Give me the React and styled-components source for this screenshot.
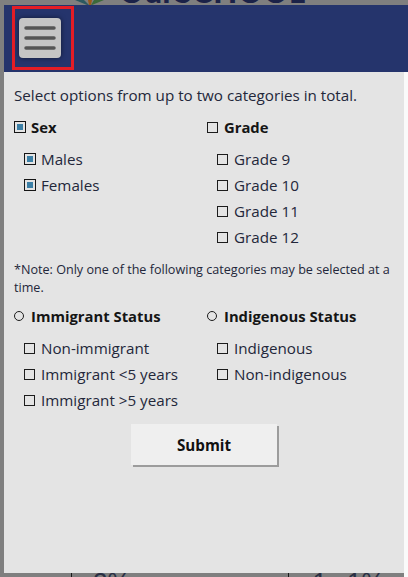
import styled, { createGlobalStyle } from "styled-components";

const GlobalStyle = createGlobalStyle`
  body {
    margin: 0;
    font-family: "Open Sans", "Noto Sans", sans-serif;
  }
`;

const sexOptions = [
  { label: "Males", checked: true },
  { label: "Females", checked: true },
];
const gradeOptions = ["Grade 9", "Grade 10", "Grade 11", "Grade 12"];
const immigrantOptions = ["Non-immigrant", "Immigrant <5 years", "Immigrant >5 years"];
const indigenousOptions = ["Indigenous", "Non-indigenous"];

function MenuIcon() {
  return (
    <svg width="32" height="24" viewBox="0 0 32 24">
      <g stroke="#555" strokeWidth="3.5" strokeLinecap="round">
        <line x1="2" y1="2" x2="30" y2="2" />
        <line x1="2" y1="12" x2="30" y2="12" />
        <line x1="2" y1="22" x2="30" y2="22" />
      </g>
    </svg>
  );
}

// only the lower tips of the logo leaves show above the drawer
function LeafTips() {
  return (
    <svg width="30" height="5" viewBox="0 0 30 5">
      <path d="M0 0 L9 0 L14 5 L12 5Z" fill="#2c5960" />
      <path d="M13 0 L17 0 L16 5 L14 5Z" fill="#9a5a1a" />
      <path d="M19 0 L29 0 L17 5 L16 5Z" fill="#3c6a3a" />
    </svg>
  );
}

function Check({ checked }) {
  return checked ? (
    <CheckedBox>
      <CheckedFill />
    </CheckedBox>
  ) : (
    <EmptyBox />
  );
}

export default function App() {
  return (
    <>
      <GlobalStyle />
      <Screen>
        <Column>
          <TopPeek>
            <LeafTips />
            <LogoText>OurSCHOOL</LogoText>
          </TopPeek>
          <Header>
            <MenuFrame>
              <MenuButton aria-label="Menu">
                <MenuIcon />
              </MenuButton>
            </MenuFrame>
          </Header>
          <LowerRow>
            <Main>
              <Body>
                <Intro>Select options from up to two categories in total.</Intro>

                <Categories>
                  <Group>
                    <Heading>
                      <Check checked />
                      Sex
                    </Heading>
                    <OptionList>
                      {sexOptions.map((o) => (
                        <Option key={o.label}>
                          <Check checked={o.checked} />
                          {o.label}
                        </Option>
                      ))}
                    </OptionList>
                  </Group>
                  <Group>
                    <Heading>
                      <Check />
                      Grade
                    </Heading>
                    <OptionList>
                      {gradeOptions.map((g) => (
                        <Option key={g}>
                          <Check />
                          {g}
                        </Option>
                      ))}
                    </OptionList>
                  </Group>
                </Categories>

                <Note>
                  *Note: Only one of the following categories may be selected at a time.
                </Note>

                <Categories>
                  <Group>
                    <Heading $radio>
                      <Radio />
                      Immigrant Status
                    </Heading>
                    <OptionList>
                      {immigrantOptions.map((o) => (
                        <Option key={o}>
                          <Check />
                          {o}
                        </Option>
                      ))}
                    </OptionList>
                  </Group>
                  <Group>
                    <Heading $radio>
                      <Radio />
                      Indigenous Status
                    </Heading>
                    <OptionList>
                      {indigenousOptions.map((o) => (
                        <Option key={o}>
                          <Check />
                          {o}
                        </Option>
                      ))}
                    </OptionList>
                  </Group>
                </Categories>

                <SubmitRow>
                  <SubmitButton>Submit</SubmitButton>
                </SubmitRow>
              </Body>
              <BottomPeek>
                <Rule $left={67} />
                <PeekNumber $left={21}>2%</PeekNumber>
                <Rule $left={157} />
                <PeekNumber $left={24}>1</PeekNumber>
                <PeekNumber $left={20}>1%</PeekNumber>
              </BottomPeek>
            </Main>
            <Gutter />
          </LowerRow>
        </Column>
      </Screen>
    </>
  );
}

const Screen = styled.div`
  width: 408px;
  height: 577px;
  overflow: hidden;
  background: #7f7f7f;
  padding-left: 4px;
  box-sizing: border-box;
  display: flex;
`;

const Column = styled.div`
  width: 404px;
  display: flex;
  flex-direction: column;
`;

const TopPeek = styled.div`
  height: 5px;
  overflow: hidden;
  display: flex;
  align-items: flex-end;
  padding-left: 71px;
  gap: 14px;
  svg {
    flex: none;
  }
`;

const LogoText = styled.span`
  flex: none;
  font-family: Lato, sans-serif;
  font-weight: 900;
  font-size: 31px;
  line-height: 1;
  letter-spacing: 0.5px;
  color: #1b2248;
  margin-bottom: -2px;
`;

const Header = styled.header`
  height: 67px;
  background: #25346c;
  display: flex;
  align-items: flex-start;
`;

const MenuFrame = styled.div`
  margin: 1px 0 0 8px;
  width: 62px;
  height: 64px;
  box-sizing: border-box;
  border: 3px solid #e41d25;
  display: flex;
  align-items: center;
  padding-left: 4px;
`;

const MenuButton = styled.button`
  width: 42px;
  height: 40px;
  border: none;
  padding: 0;
  border-radius: 4px;
  background: #c5c5c5;
  box-shadow: 0 0 5px rgba(0, 0, 0, 0.55);
  display: flex;
  align-items: center;
  justify-content: center;
`;

const LowerRow = styled.div`
  flex: 1;
  display: flex;
`;

const Main = styled.div`
  width: 400px;
  display: flex;
  flex-direction: column;
`;

const Gutter = styled.div`
  width: 4px;
  background: #fafafa;
`;

const Body = styled.main`
  height: 501px;
  box-sizing: border-box;
  background: #e4e4e4;
  padding: 10px 6px 0 10px;
  color: #23273a;
  font-size: 15.2px;
`;

const Intro = styled.p`
  margin: 0;
  line-height: 26px;
`;

const Categories = styled.div`
  display: grid;
  grid-template-columns: 193px 1fr;
  margin-top: 6px;
`;

const Group = styled.div`
  display: flex;
  flex-direction: column;
  gap: 6px;
`;

const Heading = styled.div`
  display: flex;
  align-items: center;
  gap: ${(p) => (p.$radio ? "7px" : "5px")};
  height: 26px;
  font-size: 14.8px;
  font-weight: 700;
  color: #151515;
`;

const OptionList = styled.div`
  display: flex;
  flex-direction: column;
  padding-left: 10px;
`;

const Option = styled.div`
  display: flex;
  align-items: center;
  gap: 5px;
  height: 26px;
`;

const CheckedBox = styled.span`
  flex: none;
  width: 12px;
  height: 12px;
  box-sizing: border-box;
  border: 1.5px solid #141414;
  padding: 2px;
  display: flex;
`;

const CheckedFill = styled.span`
  flex: 1;
  background: #3b7fa6;
`;

const EmptyBox = styled.span`
  flex: none;
  width: 11px;
  height: 11px;
  box-sizing: border-box;
  border: 1px solid #1c1c1c;
  margin-right: 1px;
`;

const Radio = styled.span`
  flex: none;
  width: 10px;
  height: 10px;
  box-sizing: border-box;
  border: 1.3px solid #1c1c1c;
  border-radius: 50%;
`;

const Note = styled.p`
  margin: 11px 0 0;
  font-size: 12.6px;
  line-height: 18px;
`;

const SubmitRow = styled.div`
  display: flex;
  justify-content: center;
  padding-right: 4px;
  margin-top: 11px;
`;

const SubmitButton = styled.button`
  width: 146px;
  height: 41px;
  border: none;
  background: #efefef;
  box-shadow: 2px 2px 0 #9c9c9c;
  font-family: "Open Sans", sans-serif;
  font-weight: 700;
  font-size: 15.2px;
  color: #111;
`;

const BottomPeek = styled.div`
  height: 4px;
  overflow: hidden;
  display: flex;
  align-items: flex-start;
`;

const Rule = styled.span`
  flex: none;
  width: 1px;
  height: 4px;
  background: #1a1a1a;
  margin-left: ${(p) => p.$left}px;
`;

const PeekNumber = styled.span`
  flex: none;
  margin-left: ${(p) => p.$left}px;
  margin-top: -4px;
  font-family: "Liberation Sans", sans-serif;
  font-size: 26px;
  line-height: 1;
  color: #2a2f44;
`;
